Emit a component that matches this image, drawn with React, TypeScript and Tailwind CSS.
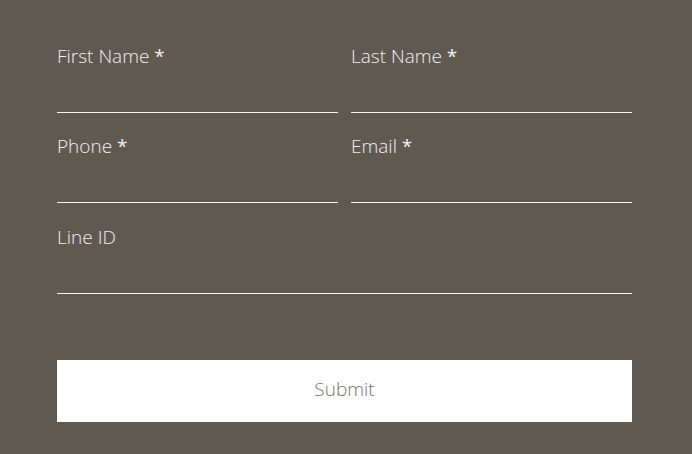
const Field = ({ label, required, className = "" }: { label: string; required?: boolean; className?: string }) => {
  return (
    <label className={`flex flex-col ${className}`}>
      <span className="text-[19px] leading-[24px] font-light text-[#f3efec]">
        {label}
        {required && <span className="font-normal"> *</span>}
      </span>
      <input
        type="text"
        className="h-[45px] bg-transparent border-b border-[#f5f2ef] outline-none text-white"
      />
    </label>
  );
};

const App = () => {
  return (
    <div
      className="w-[692px] h-[454px] bg-[#605952] px-[57px] pt-[44px]"
      style={{ fontFamily: '"Open Sans", "Liberation Sans", sans-serif' }}
    >
      <form className="w-[575px]">
        <div className="grid grid-cols-2 gap-x-[13px]">
          <Field label="First Name" required />
          <Field label="Last Name" required />
          <Field label="Phone" required className="mt-[21px]" />
          <Field label="Email" required className="mt-[21px]" />
        </div>
        <Field label="Line ID" className="mt-[22px]" />
        <button
          type="button"
          className="mt-[66px] w-full h-[62px] pb-[3px] bg-white text-[#777371] text-[19px] font-light"
        >
          Submit
        </button>
      </form>
    </div>
  );
};

export default App;
